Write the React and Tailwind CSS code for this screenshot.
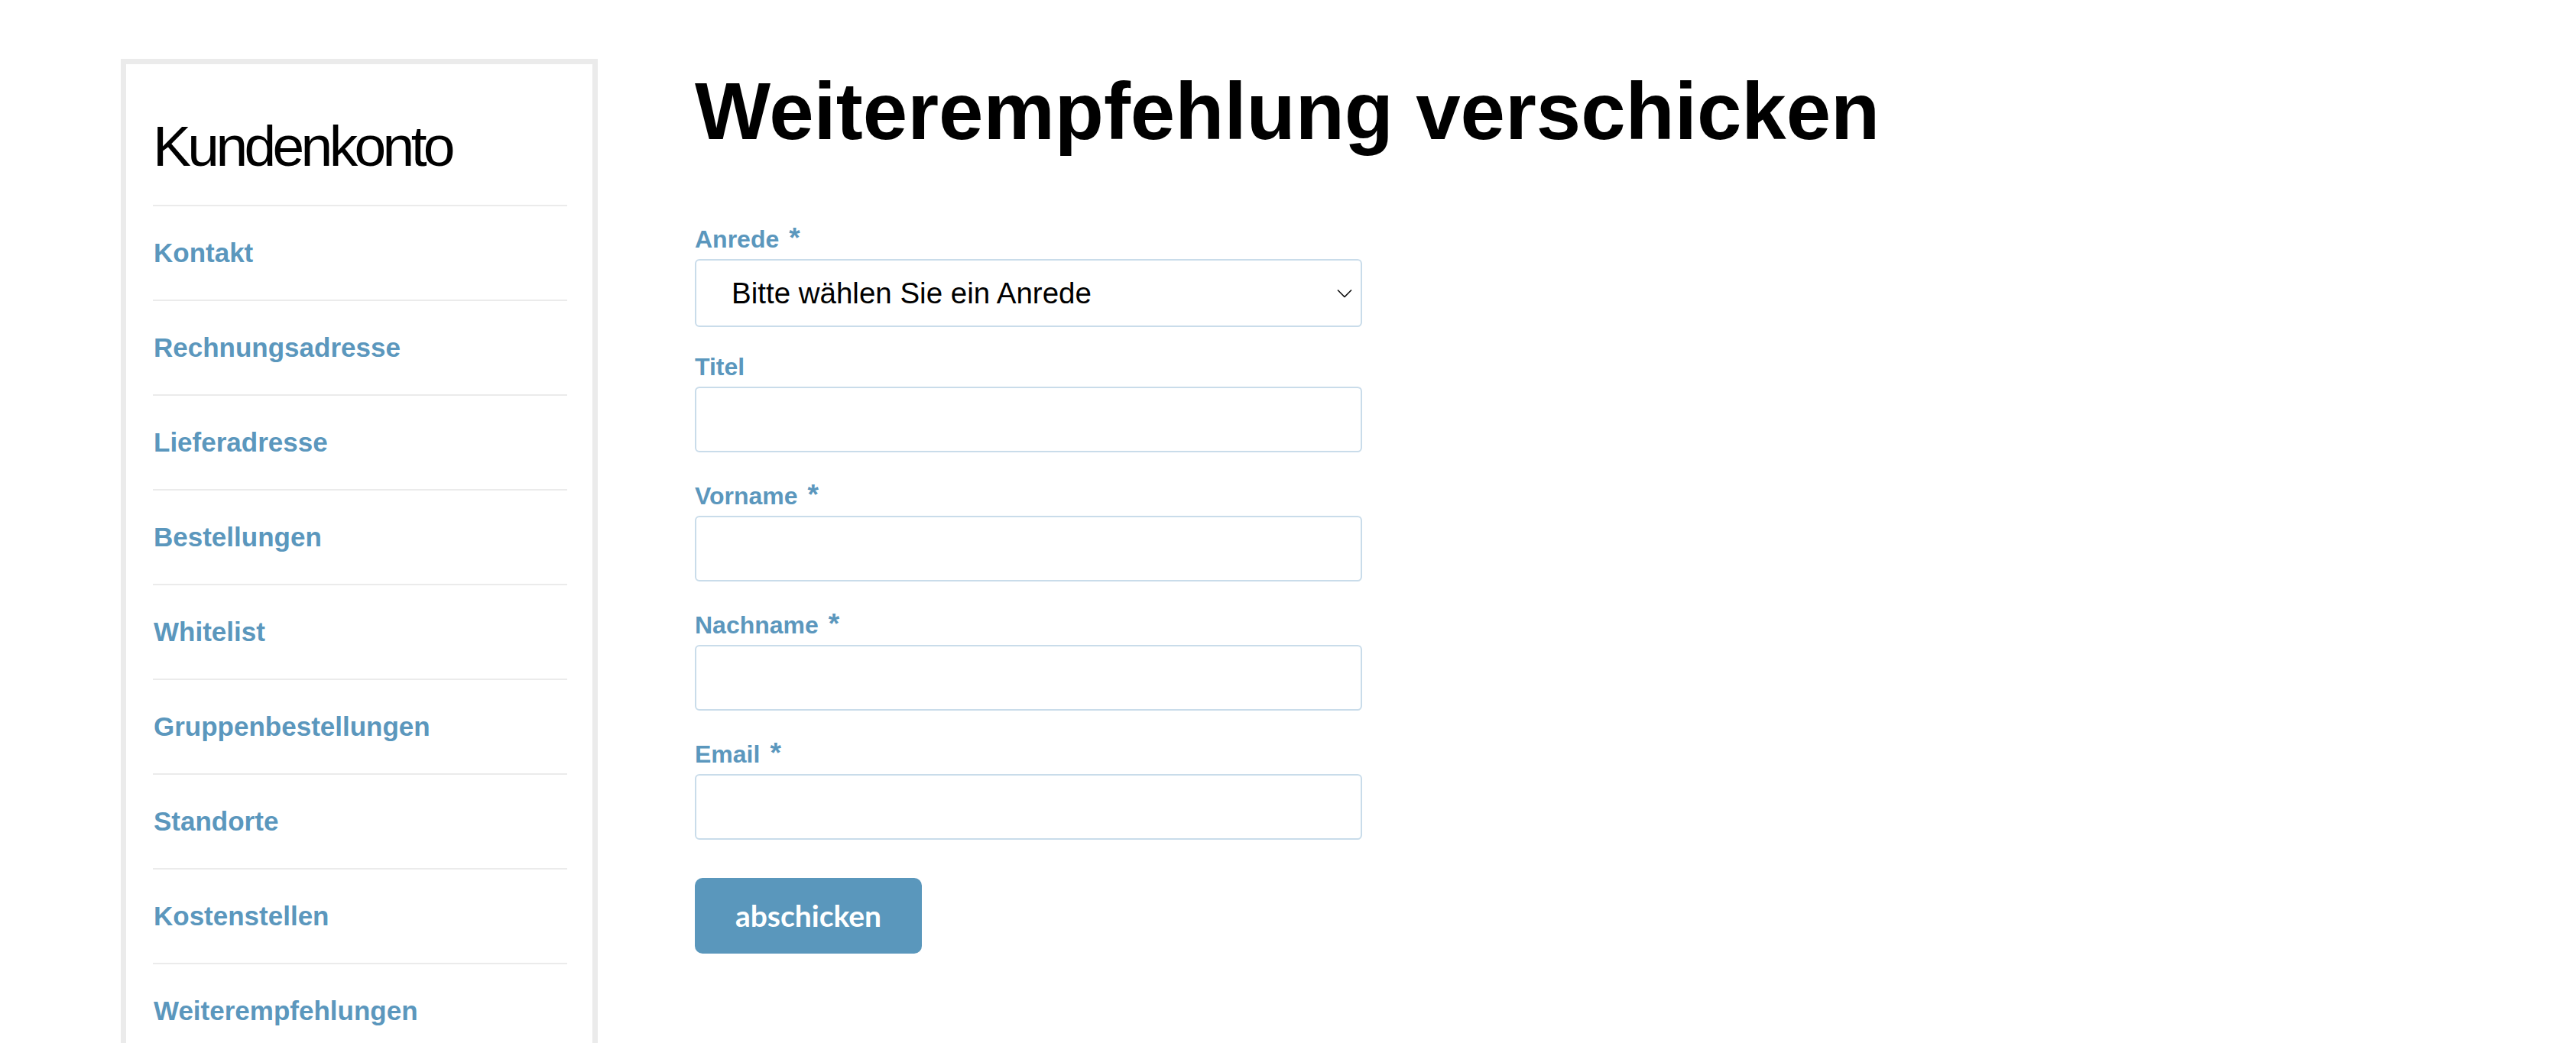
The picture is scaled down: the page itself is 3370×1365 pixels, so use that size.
import React from "react";

const menu = [
  "Kontakt",
  "Rechnungsadresse",
  "Lieferadresse",
  "Bestellungen",
  "Whitelist",
  "Gruppenbestellungen",
  "Standorte",
  "Kostenstellen",
  "Weiterempfehlungen",
];

const Label = ({ text, required, className = "" }) => (
  <label
    className={`block h-[31px] text-[32px] leading-none font-bold text-[#5b97bd] ${className}`}
  >
    {text}
    {required && <span className="ml-[13px] text-[37px] leading-[0]">*</span>}
  </label>
);

const Input = () => (
  <input
    type="text"
    className="block h-[86px] w-[873px] rounded-[6px] border-2 border-[#c9dcea] bg-white px-[20px] text-[38px] outline-none"
  />
);

const Sidebar = () => (
  <aside className="w-[624px] shrink-0 self-start border-[7px] border-[#ebebeb] bg-white pl-[35px] pr-[33px] pt-[70px] pb-[60px]">
    {/* Sidebar Header */}
    <h2 className="mb-[39px] text-[75px] leading-none font-normal tracking-[-0.062em] text-black">
      Kundenkonto
    </h2>

    {/* Navigation Links */}
    <nav>
      {menu.map((item) => (
        <a
          key={item}
          href="#"
          className="flex h-[124px] items-center border-t-2 border-[#ebebeb] pl-[1px] pb-[2px] text-[35px] leading-none font-bold text-[#5b97bd]"
        >
          {item}
        </a>
      ))}
    </nav>
  </aside>
);

export default function App() {
  return (
    <div className="flex min-h-screen bg-white pl-[158px] pt-[77px] font-['Liberation_Sans',Arial,sans-serif]">
      <Sidebar />

      <main className="ml-[127px]">
        <h1 className="mt-[16px] text-[105px] leading-none font-bold text-black">
          Weiterempfehlung verschicken
        </h1>

        <form className="mt-[99px]">
          {/* Anrede */}
          <Label text="Anrede" required />
          <div className="relative mt-[11px] w-[873px]">
            <select
              defaultValue=""
              className="block h-[89px] w-full appearance-none rounded-[6px] border-2 border-[#c9dcea] bg-white pl-[46px] text-[38.5px] text-black outline-none"
            >
              <option value="">Bitte wählen Sie ein Anrede</option>
              <option>Herr</option>
              <option>Frau</option>
            </select>
            <svg
              className="pointer-events-none absolute right-[13px] top-1/2 -translate-y-1/2"
              width="20"
              height="11"
              viewBox="0 0 20 11"
              fill="none"
            >
              <path d="M1 1 L10 10 L19 1" stroke="#111" strokeWidth="1.6" />
            </svg>
          </div>

          {/* Titel */}
          <Label text="Titel" className="mt-[36px]" />
          <div className="mt-[11px]">
            <Input />
          </div>

          {/* Vorname */}
          <Label text="Vorname" required className="mt-[41px]" />
          <div className="mt-[11px]">
            <Input />
          </div>

          {/* Nachname */}
          <Label text="Nachname" required className="mt-[41px]" />
          <div className="mt-[11px]">
            <Input />
          </div>

          {/* Email */}
          <Label text="Email" required className="mt-[41px]" />
          <div className="mt-[11px]">
            <Input />
          </div>

          <button
            type="button"
            className="mt-[50px] flex h-[99px] w-[297px] items-center justify-center rounded-[10px] bg-[#5a97bc] font-['Lato',sans-serif] text-[39px] font-bold text-white"
          >
            abschicken
          </button>
        </form>
      </main>
    </div>
  );
}
